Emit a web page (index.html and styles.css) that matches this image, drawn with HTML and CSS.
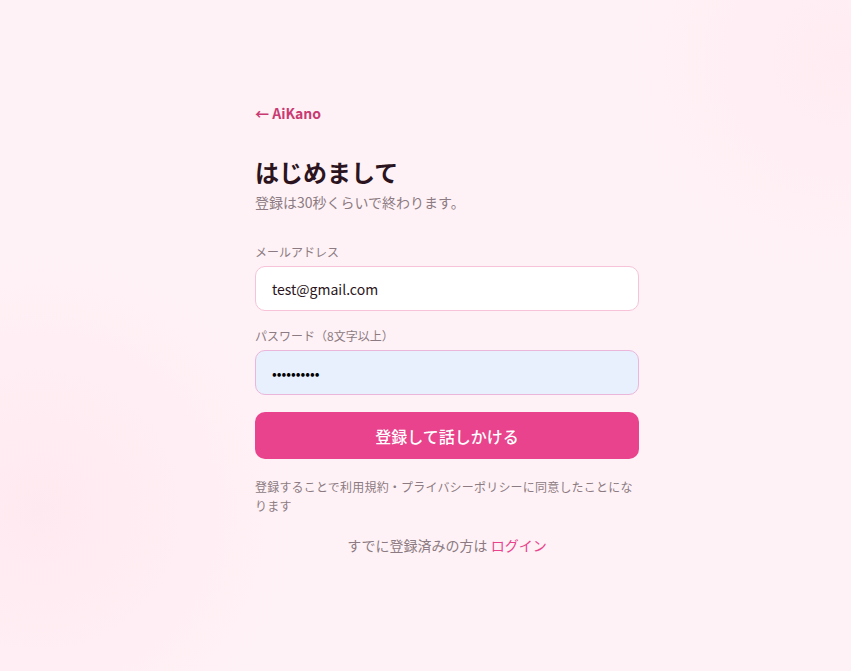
FILE: index.html
```html
<!DOCTYPE html>
<html lang="ja">
<head>
  <meta charset="UTF-8">
  <meta name="viewport" content="width=device-width, initial-scale=1.0">
  <title>AiKano - 新規登録</title>
  <link rel="stylesheet" href="styles.css">
</head>
<body>

  <!-- Signup -->
  <main class="signup">
    <a class="back-link" href="#">← AiKano</a>

    <h1 class="title">はじめまして</h1>
    <p class="subtitle">登録は30秒くらいで終わります。</p>

    <form class="signup-form">
      <label class="field-label" for="email">メールアドレス</label>
      <input class="field-input" type="email" id="email" value="test@gmail.com">

      <label class="field-label" for="password">パスワード（8文字以上）</label>
      <input class="field-input autofilled" type="password" id="password" value="password12">

      <button class="submit-btn" type="button">登録して話しかける</button>
    </form>

    <p class="terms">登録することで利用規約・プライバシーポリシーに同意したことになります</p>

    <p class="login-line">すでに登録済みの方は <a href="#">ログイン</a></p>
  </main>

</body>
</html>
```

FILE: styles.css
```css
html, body {
  height: 100%;
}
body {
  margin: 0;
  font-family: "Noto Sans CJK JP", "Noto Sans", sans-serif;
  color: #2b1420;
  background-color: #fff2f6;
  background-image:
    radial-gradient(circle at 40px 510px, #ffe9f0 0, rgba(255, 233, 240, 0) 260px),
    radial-gradient(circle at 840px 60px, #ffecf2 0, rgba(255, 236, 242, 0) 220px);
}
/* Signup column */
.signup {
  width: 384px;
  margin-left: 255px;
  padding-top: 103px;
}
.back-link {
  display: block;
  font-size: 14px;
  line-height: 20px;
  font-weight: 600;
  color: #c93a72;
  text-decoration: none;
}
.title {
  margin: 33px 0 0;
  font-size: 24px;
  line-height: 32px;
  font-weight: 700;
  color: #2b1420;
}
.subtitle {
  margin: 4px 0 0;
  font-size: 14px;
  line-height: 20px;
  color: #8c7b82;
}
/* Form */
.signup-form {
  display: flex;
  flex-direction: column;
  margin-top: 32px;
}
.field-label {
  font-size: 12px;
  line-height: 16px;
  color: #8c7b82;
}
.field-input {
  box-sizing: border-box;
  height: 45px;
  margin: 6px 0 17px;
  padding: 0 16px;
  font-family: inherit;
  font-size: 14px;
  color: #2b1420;
  background-color: #fff;
  border: 1px solid #f6c3d9;
  border-radius: 10px;
  outline: none;
}
.field-input.autofilled {
  background-color: #e8f0fe;
  border-color: #eab6d9;
  color: #000;
}
.submit-btn {
  height: 47px;
  font-family: inherit;
  font-size: 16px;
  font-weight: 500;
  color: #fff;
  background-color: #e8438c;
  border: none;
  border-radius: 10px;
  cursor: pointer;
}
.terms {
  margin: 18px 0 0;
  font-size: 12px;
  line-height: 19px;
  letter-spacing: 0.2px;
  color: #8c7b82;
}
.login-line {
  margin: 20px 0 0;
  font-size: 14px;
  line-height: 20px;
  text-align: center;
  color: #8c7b82;
}
.login-line a {
  color: #e8438c;
  text-decoration: none;
}
```
